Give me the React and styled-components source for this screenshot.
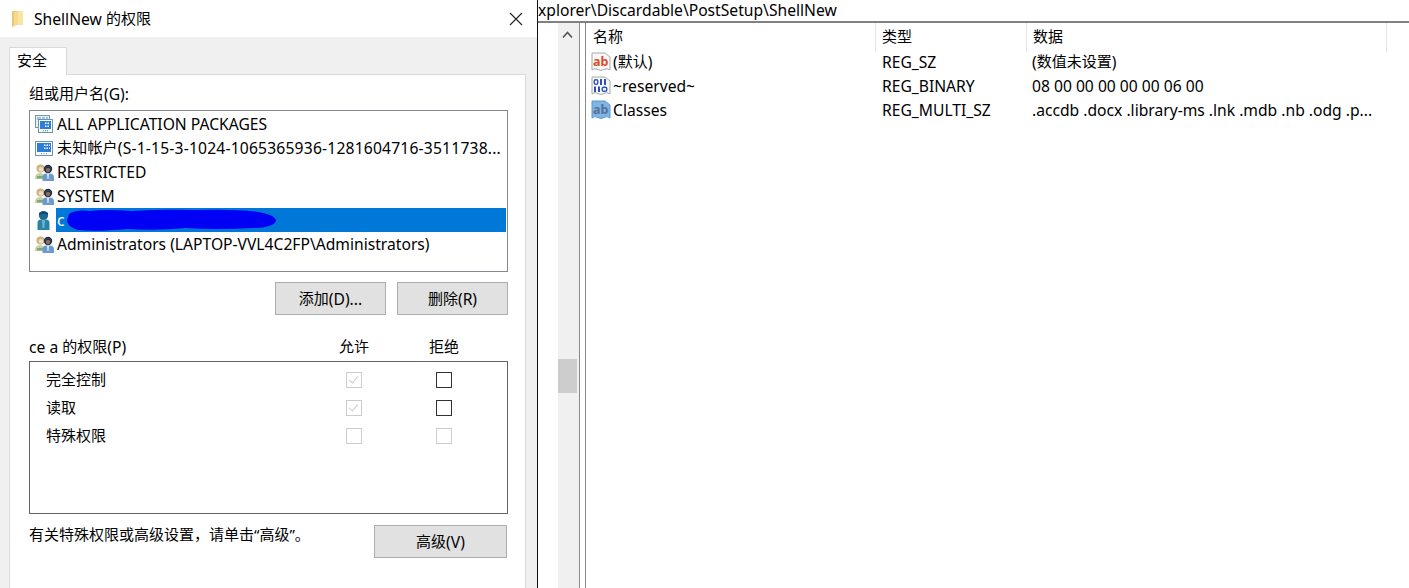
import React from "react";
import styled, { createGlobalStyle } from "styled-components";

const GlobalStyle = createGlobalStyle`
  html, body {
    margin: 0;
    padding: 0;
    background: #fff;
  }
  body {
    font-family: "Noto Sans", "Noto Sans CJK SC", sans-serif;
    font-size: 15.65px;
    color: #000;
  }
`;

const accounts = [
  { icon: "package", label: "ALL APPLICATION PACKAGES" },
  { icon: "unknown", label: "未知帐户(S-1-15-3-1024-1065365936-1281604716-3511738...", spread: true },
  { icon: "group", label: "RESTRICTED" },
  { icon: "group", label: "SYSTEM" },
  { icon: "user", label: "c", selected: true },
  { icon: "group", label: "Administrators (LAPTOP-VVL4C2FP\\Administrators)" },
];

const permissions = [
  { label: "完全控制", allow: "checked", deny: "on" },
  { label: "读取", allow: "checked", deny: "on" },
  { label: "特殊权限", allow: "off", deny: "off" },
];

const values = [
  { icon: "text", name: "(默认)", type: "REG_SZ", data: "(数值未设置)" },
  { icon: "binary", name: "~reserved~", type: "REG_BINARY", data: "08 00 00 00 00 00 06 00" },
  { icon: "multi", name: "Classes", type: "REG_MULTI_SZ", data: ".accdb .docx .library-ms .lnk .mdb .nb .odg .p..." },
];

// the latin and chinese runs need different sizes to get the original widths
const Mixed = ({ text }) =>
  text.split(/([\u3000-\u303f\u4e00-\u9fff\uff00-\uffef“”]+)/).map((part, i) =>
    i % 2 ? <Cjk key={i}>{part}</Cjk> : part
  );

const FolderIcon = () => (
  <svg width="14" height="18" viewBox="0 0 14 18">
    <path d="M1 1 L12 1 L12 15 L1 15 Z" fill="#fbe3a0" />
    <path d="M1 1 L7 1 L7 14 L1 17 Z" fill="#e9c872" />
    <path d="M3 2 L7 1 L7 14 L3 16 Z" fill="#f6d98c" />
  </svg>
);

const CloseIcon = () => (
  <svg width="14" height="14" viewBox="0 0 14 14">
    <path d="M1 1 L13 13 M13 1 L1 13" stroke="#222" strokeWidth="1.1" />
  </svg>
);

const AccountIcon = ({ kind }) => {
  if (kind === "package") {
    return (
      <svg width="18" height="18" viewBox="0 0 18 18">
        <rect x="0.5" y="0.5" width="14" height="12" fill="#e8f0f6" stroke="#7397ad" />
        <path d="M2 2h4v3H2zM7 2h3v3H7zM11 2h2v3h-2z" fill="#9fc3e4" />
        <rect x="3.5" y="4.5" width="14" height="13" fill="#fff" stroke="#6f93a8" />
        <rect x="5" y="6" width="11" height="8" fill="#2b7fd8" />
        <path d="M10 7.5h1.5V9H10zM12.5 7.5H14V9h-1.5zM10 10.5h1.5V12H10zM12.5 10.5H14V12h-1.5z" fill="#fff" />
        <path d="M8 15.2h1v1H8zM10 15.2h1v1h-1zM12 15.2h1v1h-1z" fill="#3b78b8" />
      </svg>
    );
  }
  if (kind === "unknown") {
    return (
      <svg width="18" height="15" viewBox="0 0 18 15">
        <rect x="0.5" y="0.5" width="17" height="14" fill="#fff" stroke="#6f93a8" />
        <rect x="2" y="2" width="14" height="9" fill="#2b7fd8" />
        <path d="M9 3.5h1.5V5H9zM11.5 3.5H13V5h-1.5zM14 3.5h1V5h-1zM9 6.5h1.5V8H9zM11.5 6.5H13V8h-1.5zM14 6.5h1V8h-1z" fill="#fff" />
        <path d="M6 12.2h1v1H6zM8.5 12.2h1v1h-1zM11 12.2h1v1h-1z" fill="#3b78b8" />
      </svg>
    );
  }
  if (kind === "user") {
    return (
      <svg width="18" height="20" viewBox="0 0 18 20">
        <circle cx="8.5" cy="5.5" r="4.6" fill="#1c6a92" />
        <path d="M4 3 Q8 -0.5 13 3 L13 5 Q8 3 4 5 Z" fill="#154d78" />
        <path d="M2.5 20 L2.5 13 Q2.5 9.5 6 9.5 L11 9.5 Q14.5 9.5 14.5 13 L14.5 20 Z" fill="#2a83a6" />
        <path d="M7 10 L10 10 L9.5 18 L7.5 18 Z" fill="#66b3cc" />
      </svg>
    );
  }
  return (
    <svg width="19" height="17" viewBox="0 0 19 17">
      <circle cx="5.5" cy="4.5" r="4" fill="#cdb27a" />
      <circle cx="6" cy="5.3" r="2.4" fill="#efe0c4" />
      <path d="M0 15 Q0 9 5 9 Q10 9 10 15 Z" fill="#c5cfa6" />
      <path d="M2 12 L8 12 L8 14.5 L2 14.5 Z" fill="#79b06f" />
      <circle cx="13" cy="5" r="4.2" fill="#26344c" />
      <circle cx="13" cy="6" r="2.2" fill="#8a6f5c" />
      <path d="M7.5 17 L7.5 13 Q7.5 9.5 11.5 9.5 L14.5 9.5 Q19 9.5 19 13 L19 17 Z" fill="#6f9ad0" />
      <path d="M12 9.5 L14 9.5 L13.5 15 L12.5 15 Z" fill="#e6eef7" />
    </svg>
  );
};

const ValueIcon = ({ kind }) => {
  const blue = kind === "multi";
  return (
    <svg width="20" height="20" viewBox="0 0 20 20">
      <path
        d="M1 1 L14 1 L19 5 L19 18 Q16 15.5 13 17.5 Q10 19.5 7 17.5 Q4 15.5 1 18 Z"
        fill={blue ? "#7db5e4" : "#f8f8f8"}
        stroke={blue ? "#5a98cf" : "#a9a9a9"}
      />
      {kind === "text" && (
        <text x="2" y="13.5" fontSize="12.5" fontWeight="700" fill="#e04a26">ab</text>
      )}
      {kind === "multi" && (
        <text x="2" y="13.5" fontSize="12.5" fontWeight="700" fill="#5a6f98">ab</text>
      )}
      {kind === "binary" && (
        <>
          <rect x="3.2" y="3.7" width="3.6" height="4.6" rx="1.6" fill="none" stroke="#2d50c0" strokeWidth="1.4" />
          <path d="M9 3h2v6H9zM13 3h2v6h-2z" fill="#2d50c0" />
          <path d="M3 10.5h2v5.5H3zM7 10.5h2v5.5H7z" fill="#2d50c0" />
          <rect x="11.2" y="11.2" width="4.6" height="4.1" rx="1.6" fill="none" stroke="#2d50c0" strokeWidth="1.4" />
        </>
      )}
    </svg>
  );
};

const Redaction = () => (
  <Scribble width="212" height="24" viewBox="0 0 212 24">
    <path
      d="M3 6 Q10 1 24 3 Q40 1 66 3 Q95 1 130 2 Q170 1 192 4 Q210 7 210 13 Q207 20 186 20 Q150 22 120 20 Q90 23 62 21 Q30 24 12 22 Q1 19 1 12 Z"
      fill="#0000f5"
    />
  </Scribble>
);

const App = () => (
  <Page>
    <GlobalStyle />
    <Dialog>
      <TitleBar>
        <TitleGroup>
          <FolderIcon />
          <TitleText><Mixed text="ShellNew 的权限" /></TitleText>
        </TitleGroup>
        <CloseIcon />
      </TitleBar>
      <DialogBody>
        <Tab><Cjk>安全</Cjk></Tab>
        <TabPanel>
          <Label><Mixed text="组或用户名(G):" /></Label>
          <AccountList>
            {accounts.map((account) => (
              <AccountRow key={account.label}>
                <AccountIconCell>
                  <AccountIcon kind={account.icon} />
                </AccountIconCell>
                <AccountLabel $selected={account.selected} $spread={account.spread}>
                  <Mixed text={account.label} />
                  {account.selected && <Redaction />}
                </AccountLabel>
              </AccountRow>
            ))}
          </AccountList>
          <ButtonRow>
            <Button><Mixed text="添加(D)..." /></Button>
            <Button><Mixed text="删除(R)" /></Button>
          </ButtonRow>
          <PermissionHead>
            <span><Mixed text="ce a 的权限(P)" /></span>
            <HeadCell><Cjk>允许</Cjk></HeadCell>
            <HeadCell $second><Cjk>拒绝</Cjk></HeadCell>
          </PermissionHead>
          <PermissionBox>
            {permissions.map((item) => (
              <PermissionRow key={item.label}>
                <PermissionName><Cjk>{item.label}</Cjk></PermissionName>
                <CheckBox $state={item.allow} />
                <CheckBox $state={item.deny} />
              </PermissionRow>
            ))}
          </PermissionBox>
          <Footer>
            <span><Mixed text="有关特殊权限或高级设置，请单击“高级”。" /></span>
            <AdvancedButton><Mixed text="高级(V)" /></AdvancedButton>
          </Footer>
        </TabPanel>
      </DialogBody>
    </Dialog>
    <Editor>
      <PathBar>xplorer\Discardable\PostSetup\ShellNew</PathBar>
      <EditorBody>
        <Rail />
        <ScrollBar>
          <svg width="11" height="8" viewBox="0 0 11 8">
            <path d="M1 6.5 L5.5 1.5 L10 6.5" fill="none" stroke="#555" strokeWidth="1.6" />
          </svg>
          <ScrollThumb />
        </ScrollBar>
        <Splitter />
        <ValueTable>
          <HeaderRow>
            <HeaderCell $first><Cjk>名称</Cjk></HeaderCell>
            <HeaderCell><Cjk>类型</Cjk></HeaderCell>
            <HeaderCell><Cjk>数据</Cjk></HeaderCell>
          </HeaderRow>
          {values.map((value) => (
            <ValueRow key={value.name}>
              <NameCell>
                <ValueIcon kind={value.icon} />
                <span><Mixed text={value.name} /></span>
              </NameCell>
              <TypeCell>{value.type}</TypeCell>
              <DataCell><Mixed text={value.data} /></DataCell>
            </ValueRow>
          ))}
        </ValueTable>
      </EditorBody>
    </Editor>
  </Page>
);

const Page = styled.div`
  display: flex;
  width: 1409px;
  height: 588px;
  overflow: hidden;
`;

const Cjk = styled.span`
  display: inline-block;
  font-size: 15px;
  transform: translateY(-1px);
`;

const Dialog = styled.section`
  display: flex;
  flex-direction: column;
  width: 537px;
  flex: none;
  border-right: 1px solid #111;
  background: #f0f0f0;
`;

const TitleBar = styled.header`
  display: flex;
  align-items: center;
  justify-content: space-between;
  height: 37px;
  padding: 0 14px 0 11px;
  background: #fff;
`;

const TitleGroup = styled.div`
  display: flex;
  align-items: center;
  gap: 9px;
`;

const TitleText = styled.span`
  line-height: 20px;
`;

const DialogBody = styled.div`
  display: flex;
  flex: 1;
  flex-direction: column;
  align-items: flex-start;
  padding: 10px 11px 0 9px;
`;

const Tab = styled.div`
  position: relative;
  z-index: 1;
  box-sizing: border-box;
  width: 58px;
  height: 28px;
  margin-bottom: -1px;
  padding: 3px 0 0 7px;
  border: 1px solid #d9d9d9;
  border-bottom: none;
  background: #fff;
  line-height: 20px;
`;

const TabPanel = styled.div`
  flex: 1;
  box-sizing: border-box;
  width: 517px;
  padding: 9px 17px 0 19px;
  border: 1px solid #d9d9d9;
  border-bottom: none;
  background: #fff;
`;

const Label = styled.div`
  height: 20px;
  line-height: 20px;
`;

const AccountList = styled.div`
  box-sizing: border-box;
  height: 162px;
  margin-top: 6px;
  padding: 1px;
  border: 1px solid #828790;
`;

const AccountRow = styled.div`
  display: flex;
  align-items: center;
  height: 24px;
  white-space: nowrap;
`;

const AccountIconCell = styled.div`
  display: flex;
  flex: none;
  align-items: center;
  justify-content: center;
  width: 24px;
  padding-left: 1px;
`;

const AccountLabel = styled.div`
  position: relative;
  flex: 1;
  height: 24px;
  padding-left: 1px;
  background: ${(p) => (p.$selected ? "#0078d7" : "transparent")};
  color: ${(p) => (p.$selected ? "#fff" : "#000")};
  letter-spacing: ${(p) => (p.$spread ? "0.19px" : "normal")};
  line-height: 24px;
`;

const Scribble = styled.svg`
  position: absolute;
  top: 0;
  left: 10px;
`;

const ButtonRow = styled.div`
  display: flex;
  justify-content: flex-end;
  gap: 11px;
  margin-top: 10px;
`;

const Button = styled.div`
  display: flex;
  align-items: center;
  justify-content: center;
  box-sizing: border-box;
  width: 111px;
  height: 33px;
  border: 1px solid #adadad;
  background: #e1e1e1;
`;

const AdvancedButton = styled(Button)`
  width: 133px;
  margin-right: 1px;
`;

const PermissionHead = styled.div`
  display: grid;
  grid-template-columns: 317px 16px 74px 16px;
  margin-top: 22px;
  height: 20px;
  line-height: 20px;
  white-space: nowrap;
`;

const HeadCell = styled.span`
  display: flex;
  justify-content: center;
  width: 16px;
  grid-column: ${(p) => (p.$second ? 4 : 2)};
`;

const PermissionBox = styled.div`
  box-sizing: border-box;
  height: 153px;
  margin-top: 4px;
  padding-top: 4px;
  border: 1px solid #646464;
`;

const PermissionRow = styled.div`
  display: grid;
  grid-template-columns: 316px 90px 16px;
  align-items: center;
  height: 28px;
`;

const PermissionName = styled.span`
  padding-left: 16px;
`;

const checkBorder = { on: "#333", off: "#ccc", checked: "#ccc" };

const CheckBox = styled.span`
  position: relative;
  box-sizing: border-box;
  width: 16px;
  height: 16px;
  border: 1px solid ${(p) => checkBorder[p.$state]};
  background: #fff;
  &::after {
    content: "";
    display: ${(p) => (p.$state === "checked" ? "block" : "none")};
    position: absolute;
    top: 1px;
    left: 4px;
    width: 4px;
    height: 8px;
    border: solid #ccc;
    border-width: 0 1.5px 1.5px 0;
    transform: rotate(40deg);
  }
`;

const Footer = styled.div`
  display: flex;
  align-items: flex-start;
  justify-content: space-between;
  margin-top: 11px;
  line-height: 20px;
`;

const Editor = styled.section`
  display: flex;
  flex: 1;
  flex-direction: column;
  min-width: 0;
`;

const PathBar = styled.div`
  box-sizing: content-box;
  height: 21px;
  border-bottom: 2px solid #808080;
  line-height: 21px;
  white-space: nowrap;
`;

const EditorBody = styled.div`
  display: flex;
  flex: 1;
`;

const Rail = styled.div`
  flex: none;
  width: 20px;
`;

const ScrollBar = styled.div`
  display: flex;
  flex: none;
  flex-direction: column;
  align-items: center;
  width: 21px;
  padding-top: 8px;
  box-sizing: border-box;
  background: #f0f0f0;
  svg {
    margin-right: 2px;
  }
`;

const ScrollThumb = styled.div`
  align-self: flex-start;
  width: 19px;
  height: 34px;
  margin-top: 320px;
  background: #cdcdcd;
`;

const Splitter = styled.div`
  flex: none;
  box-sizing: border-box;
  width: 7px;
  border-left: 1px solid #8a8a8a;
  border-right: 1px solid #8a8a8a;
`;

const ValueTable = styled.div`
  flex: 1;
  min-width: 0;
`;

const HeaderRow = styled.div`
  display: grid;
  grid-template-columns: 290px 151px 360px;
  height: 27px;
`;

const HeaderCell = styled.div`
  padding-left: ${(p) => (p.$first ? "7px" : "6px")};
  border-right: 1px solid #e5e5e5;
  line-height: 29px;
`;

const ValueRow = styled.div`
  display: grid;
  grid-template-columns: 290px 151px 1fr;
  align-items: center;
  height: 24px;
  white-space: nowrap;
`;

const NameCell = styled.div`
  display: flex;
  align-items: center;
  gap: 2px;
  padding-left: 5px;
`;

const TypeCell = styled.div`
  padding-left: 6px;
`;

const DataCell = styled.div`
  padding-left: 5px;
`;

export default App;
